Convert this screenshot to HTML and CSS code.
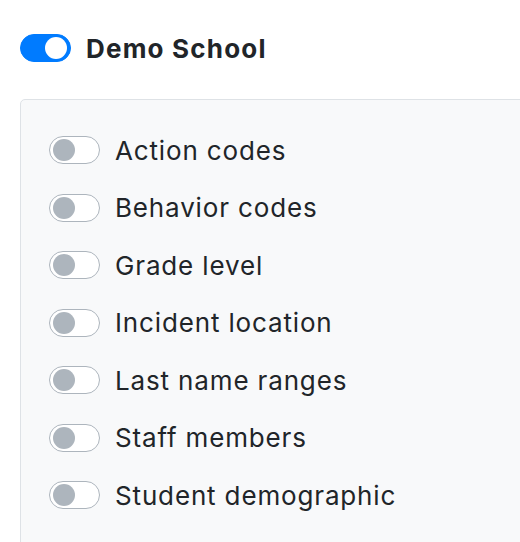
FILE: index.html
```html
<!DOCTYPE html>
<html lang="en">
<head>
    <meta charset="UTF-8">
    <title>Demo School</title>
    <link rel="stylesheet" href="styles.css">
</head>
<body>
    <!-- school toggle -->
    <div class="school">
      <span class="sw on"></span>
      <span class="school-name">Demo School</span>
    </div>

    <!-- filter list -->
    <div class="panel">
      <div class="row"><span class="sw"></span><span class="lbl">Action codes</span></div>
      <div class="row"><span class="sw"></span><span class="lbl">Behavior codes</span></div>
      <div class="row"><span class="sw"></span><span class="lbl">Grade level</span></div>
      <div class="row"><span class="sw"></span><span class="lbl">Incident location</span></div>
      <div class="row"><span class="sw"></span><span class="lbl">Last name ranges</span></div>
      <div class="row"><span class="sw"></span><span class="lbl">Staff members</span></div>
      <div class="row"><span class="sw"></span><span class="lbl">Student demographic</span></div>
    </div>
</body>
</html>
```

FILE: styles.css
```css
html, body{
  margin: 0;
  overflow: hidden;
}
body{
  padding: 34px 0 0 20px;
  background: #fff;
  color: #212529;
  font-family: Inter, "Liberation Sans", sans-serif;
  font-size: 26px;
}

/* switch */
.sw{
  position: relative;
  flex: none;
  width: 51px;
  height: 28px;
  box-sizing: border-box;
  border: 1px solid #adb5bd;
  border-radius: 14px;
  background: #fff;
}
.sw::after{
  content: "";
  position: absolute;
  top: 2px;
  left: 3px;
  width: 22px;
  height: 22px;
  border-radius: 50%;
  background: #adb5bd;
}
.sw.on{
  border-color: #007bff;
  background: #007bff;
}
.sw.on::after{
  left: auto;
  right: 3px;
  background: #fff;
}

.school{
  display: flex;
  align-items: center;
  gap: 15px;
  height: 28px;
}
.school-name{
  font-weight: 700;
  letter-spacing: 1.2px;
}

/* panel */
.panel{
  margin-top: 37px;
  width: 600px;
  height: 500px;
  box-sizing: border-box;
  padding: 36px 0 0 28px;
  border: 1px solid #dee2e6;
  border-radius: 5px;
  background: #f8f9fa;
  display: flex;
  flex-direction: column;
  gap: 29.5px;
}
.row{
  display: flex;
  align-items: center;
  gap: 15px;
  height: 28px;
}
.lbl{
  letter-spacing: 0.85px;
}
```
